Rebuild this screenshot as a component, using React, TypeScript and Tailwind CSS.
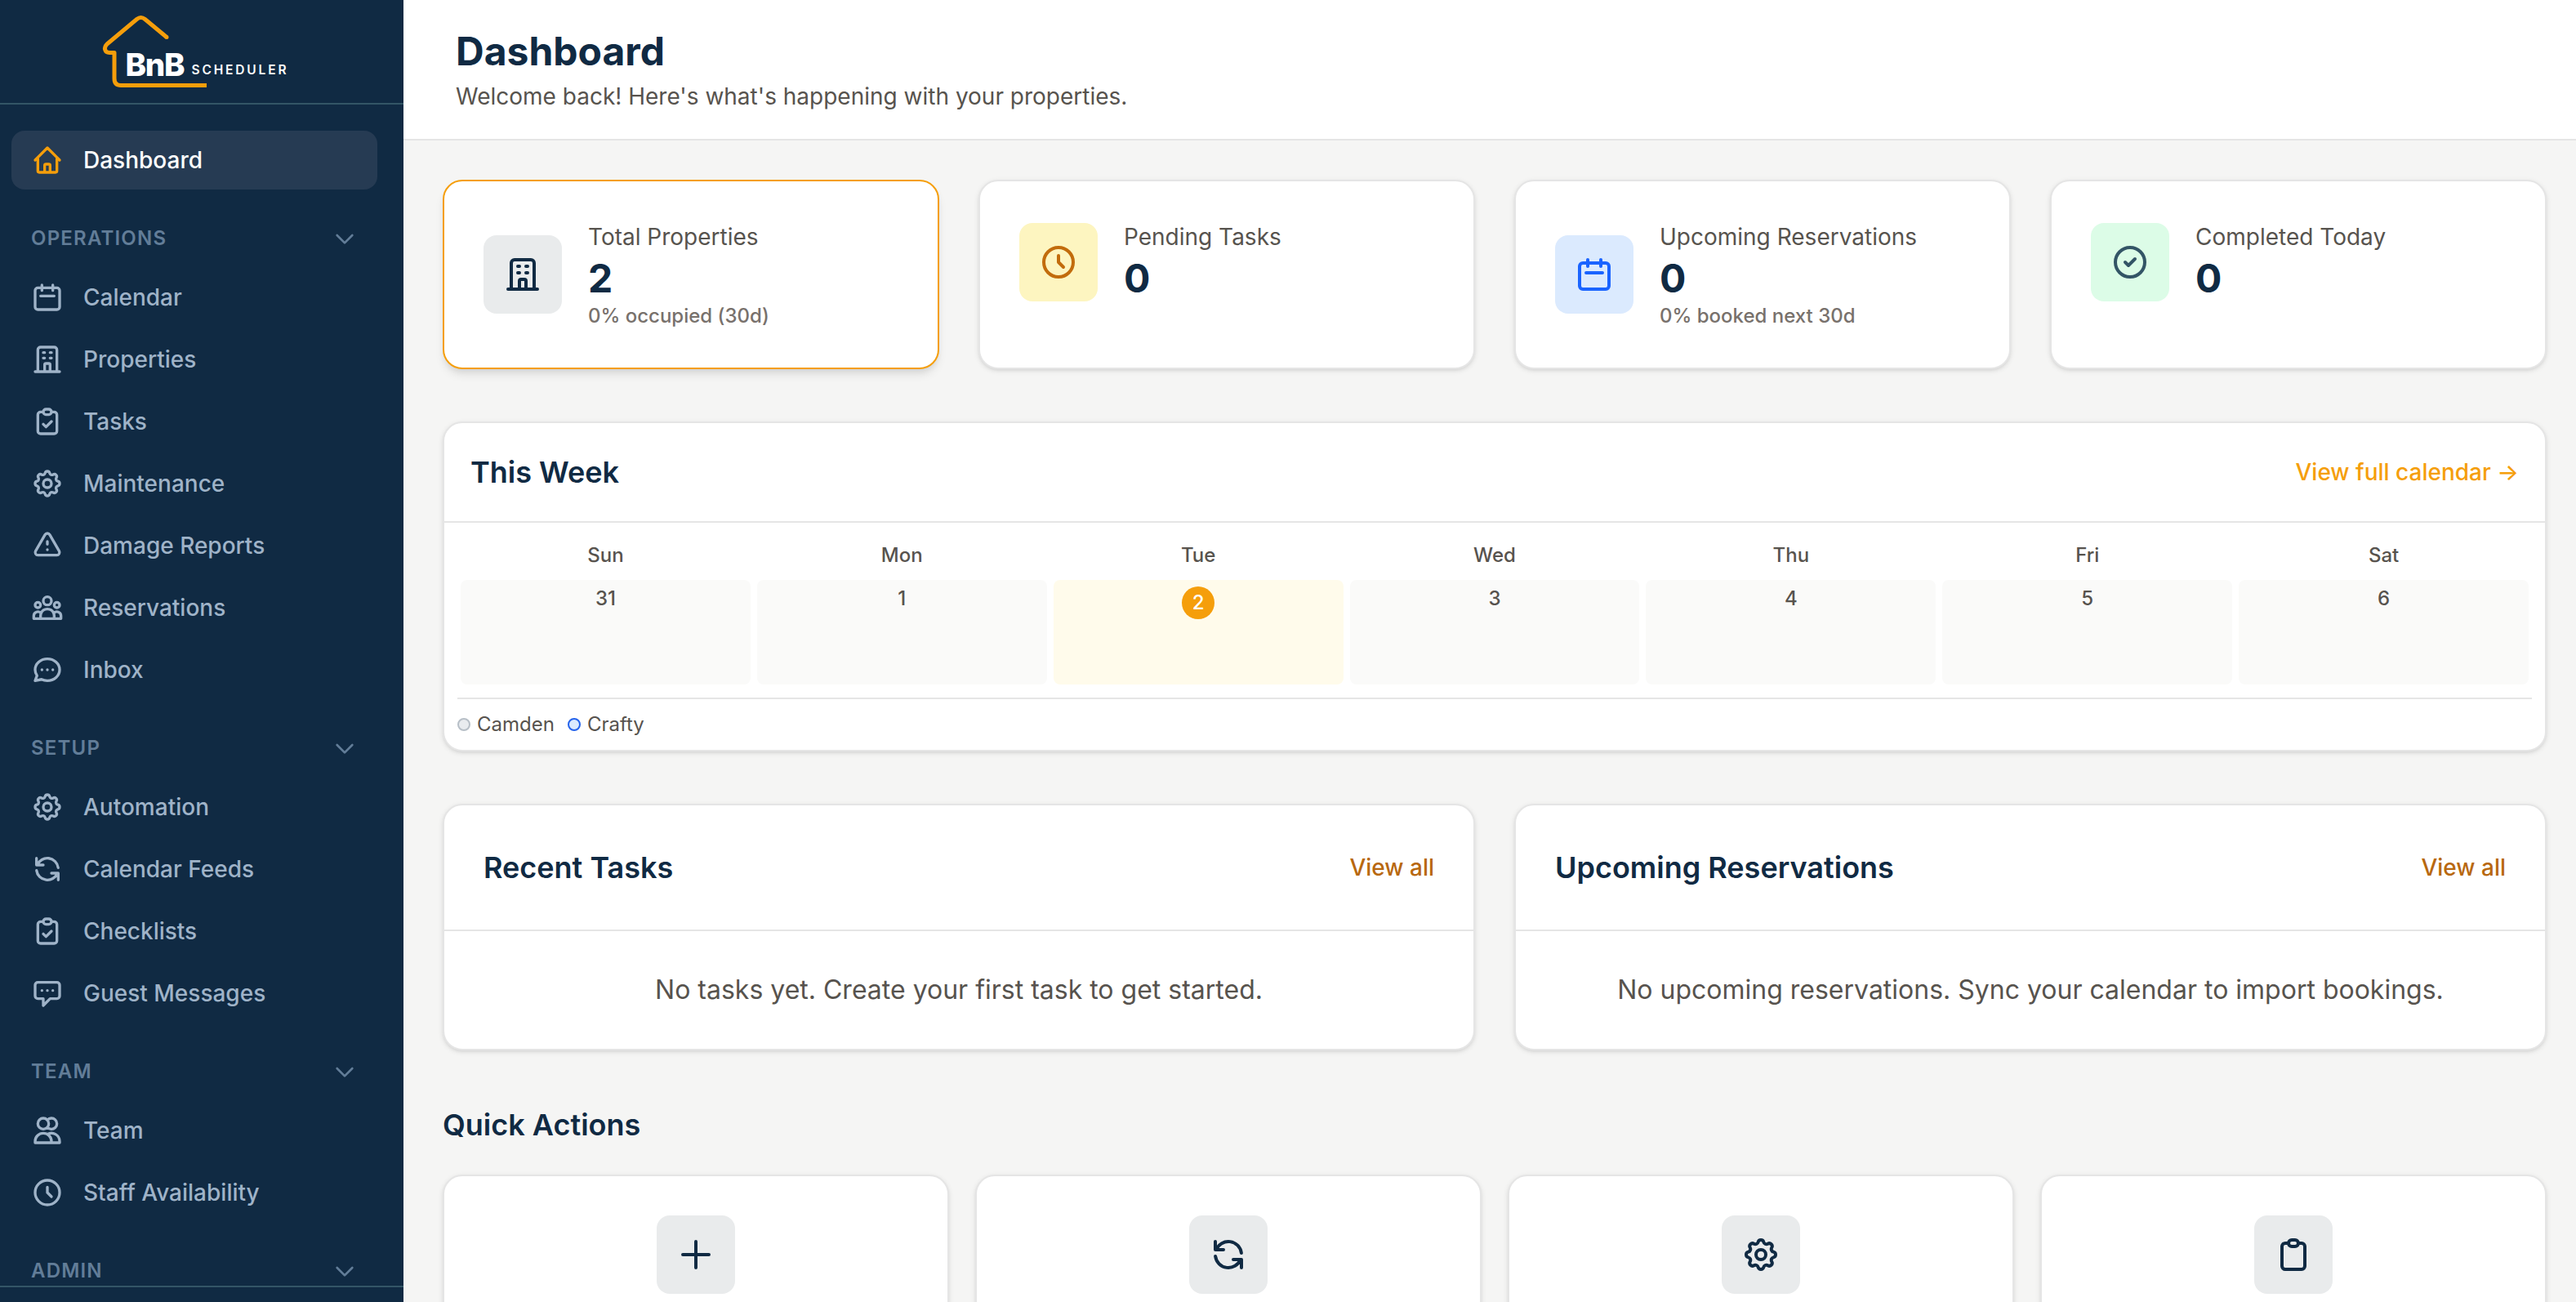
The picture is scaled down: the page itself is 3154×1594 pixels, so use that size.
import React from "react";

type IconProps = { className?: string };

function Svg({ className, children }: IconProps & { children: React.ReactNode }) {
  return (
    <svg viewBox="0 0 24 24" fill="none" stroke="currentColor" strokeWidth={2} strokeLinecap="round" strokeLinejoin="round" className={className}>
      {children}
    </svg>
  );
}

const Home = (p: IconProps) => (
  <Svg {...p}>
    <path d="M3 12l2-2m0 0l7-7 7 7M5 10v10a1 1 0 0 0 1 1h3m10-11l2 2m-2-2v10a1 1 0 0 1-1 1h-3m-6 0a1 1 0 0 0 1-1v-4a1 1 0 0 1 1-1h2a1 1 0 0 1 1 1v4a1 1 0 0 0 1 1m-6 0h6" />
  </Svg>
);
const Calendar = (p: IconProps) => (
  <Svg {...p}>
    <path d="M8 3v4M16 3v4M7 11h10" />
    <rect x="3" y="5" width="18" height="16" rx="2" />
  </Svg>
);
const Building = (p: IconProps) => (
  <Svg {...p}>
    <path d="M19 21V5a2 2 0 0 0-2-2H7a2 2 0 0 0-2 2v16m14 0h2m-2 0h-5m-9 0H3m2 0h5M9 7h1m-1 4h1m4-4h1m-1 4h1m-5 10v-5a1 1 0 0 1 1-1h2a1 1 0 0 1 1 1v5m-4 0h4" />
  </Svg>
);
const Clipboard = (p: IconProps) => (
  <Svg {...p}>
    <path d="M9 5H7a2 2 0 0 0-2 2v12a2 2 0 0 0 2 2h10a2 2 0 0 0 2-2V7a2 2 0 0 0-2-2h-2M9 5a2 2 0 0 0 2 2h2a2 2 0 0 0 2-2M9 5a2 2 0 0 1 2-2h2a2 2 0 0 1 2 2" />
  </Svg>
);
const ClipboardCheck = (p: IconProps) => (
  <Svg {...p}>
    <path d="M9 5H7a2 2 0 0 0-2 2v12a2 2 0 0 0 2 2h10a2 2 0 0 0 2-2V7a2 2 0 0 0-2-2h-2M9 5a2 2 0 0 0 2 2h2a2 2 0 0 0 2-2M9 5a2 2 0 0 1 2-2h2a2 2 0 0 1 2 2m-6 9l2 2 4-4" />
  </Svg>
);
const Gear = (p: IconProps) => (
  <Svg {...p}>
    <path d="M10.325 4.317c.426-1.756 2.924-1.756 3.35 0a1.724 1.724 0 0 0 2.573 1.066c1.543-.94 3.31.826 2.37 2.37a1.724 1.724 0 0 0 1.065 2.572c1.756.426 1.756 2.924 0 3.35a1.724 1.724 0 0 0-1.066 2.573c.94 1.543-.826 3.31-2.37 2.37a1.724 1.724 0 0 0-2.572 1.065c-.426 1.756-2.924 1.756-3.35 0a1.724 1.724 0 0 0-2.573-1.066c-1.543.94-3.31-.826-2.37-2.37a1.724 1.724 0 0 0-1.065-2.572c-1.756-.426-1.756-2.924 0-3.35a1.724 1.724 0 0 0 1.066-2.573c-.94-1.543.826-3.31 2.37-2.37.996.608 2.296.07 2.572-1.065z" />
    <circle cx="12" cy="12" r="3" />
  </Svg>
);
const Warning = (p: IconProps) => (
  <Svg {...p}>
    <path d="M12 9v2m0 4h.01m-6.938 4h13.856c1.54 0 2.502-1.667 1.732-3L13.732 4c-.77-1.333-2.694-1.333-3.464 0L3.34 16c-.77 1.333.192 3 1.732 3z" />
  </Svg>
);
const Group = (p: IconProps) => (
  <Svg {...p}>
    <path d="M17 20h5v-2a3 3 0 0 0-5.356-1.857M17 20H7m10 0v-2c0-.656-.126-1.283-.356-1.857M7 20H2v-2a3 3 0 0 1 5.356-1.857M7 20v-2c0-.656.126-1.283.356-1.857m0 0a5.002 5.002 0 0 1 9.288 0M15 7a3 3 0 1 1-6 0 3 3 0 0 1 6 0zm6 3a2 2 0 1 1-4 0 2 2 0 0 1 4 0zM7 10a2 2 0 1 1-4 0 2 2 0 0 1 4 0z" />
  </Svg>
);
const Chat = (p: IconProps) => (
  <Svg {...p}>
    <path d="M8 12h.01M12 12h.01M16 12h.01M21 12c0 4.418-4.03 8-9 8a9.863 9.863 0 0 1-4.255-.949L3 20l1.395-3.72C3.512 15.042 3 13.574 3 12c0-4.418 4.03-8 9-8s9 3.582 9 8z" />
  </Svg>
);
const Refresh = (p: IconProps) => (
  <Svg {...p}>
    <path d="M4 4v5h.582m15.356 2A8.001 8.001 0 0 0 4.582 9m0 0H9m11 11v-5h-.581m0 0a8.003 8.003 0 0 1-15.357-2m15.357 2H15" />
  </Svg>
);
const Message = (p: IconProps) => (
  <Svg {...p}>
    <path d="M8 10h.01M12 10h.01M16 10h.01M9 16H5a2 2 0 0 1-2-2V6a2 2 0 0 1 2-2h14a2 2 0 0 1 2 2v8a2 2 0 0 1-2 2h-5l-5 5v-5z" />
  </Svg>
);
const Users = (p: IconProps) => (
  <Svg {...p}>
    <path d="M12 4.354a4 4 0 1 1 0 5.292M15 21H3v-1a6 6 0 0 1 12 0v1zm0 0h6v-1a6 6 0 0 0-9-5.197M13 7a4 4 0 1 1-8 0 4 4 0 0 1 8 0z" />
  </Svg>
);
const Clock = (p: IconProps) => (
  <Svg {...p}>
    <path d="M12 8v4l3 3m6-3a9 9 0 1 1-18 0 9 9 0 0 1 18 0z" />
  </Svg>
);
const CheckCircle = (p: IconProps) => (
  <Svg {...p}>
    <path d="M9 12l2 2 4-4m6 2a9 9 0 1 1-18 0 9 9 0 0 1 18 0z" />
  </Svg>
);
const Plus = (p: IconProps) => (
  <Svg {...p}>
    <path d="M12 4v16m8-8H4" />
  </Svg>
);
const Chevron = (p: IconProps) => (
  <Svg {...p}>
    <path d="M19 9l-7 7-7-7" />
  </Svg>
);

type Item = [string, (p: IconProps) => React.JSX.Element];
const sections: { title: string; items: Item[] }[] = [
  {
    title: "OPERATIONS",
    items: [
      ["Calendar", Calendar],
      ["Properties", Building],
      ["Tasks", ClipboardCheck],
      ["Maintenance", Gear],
      ["Damage Reports", Warning],
      ["Reservations", Group],
      ["Inbox", Chat],
    ],
  },
  {
    title: "SETUP",
    items: [
      ["Automation", Gear],
      ["Calendar Feeds", Refresh],
      ["Checklists", ClipboardCheck],
      ["Guest Messages", Message],
    ],
  },
  {
    title: "TEAM",
    items: [
      ["Team", Users],
      ["Staff Availability", Clock],
    ],
  },
  { title: "ADMIN", items: [] },
];

function Logo() {
  return (
    <svg viewBox="0 0 250 110" className="ml-[115px] mt-2.5 h-[110px] w-[250px] shrink-0">
      <path
        d="M89 35.500L62.500 13.500Q57.500 9.500 52.500 13.500L16 44Q13 47 13.500 50.500Q14.500 54.500 19 54.500H25V86Q25 94.500 33 94.500H138"
        fill="none"
        stroke="#f59e0b"
        strokeWidth="5"
        strokeLinejoin="round"
      />
      <circle cx="89" cy="35.500" r="2.500" fill="#f59e0b" />
      <text x="38.500" y="82.500" fill="#fff" fontFamily="Inter" fontWeight="800" fontSize="38.500" textLength="73" lengthAdjust="spacing">BnB</text>
      <text x="119.500" y="80.500" fill="#fff" fontFamily="Inter" fontWeight="600" fontSize="15.500" textLength="116" lengthAdjust="spacing">SCHEDULER</text>
    </svg>
  );
}

function Sidebar() {
  return (
    <aside className="flex h-full w-[494px] shrink-0 flex-col bg-[#102a43]">
      <div className="flex h-32 shrink-0 border-b-2 border-[#335566]">
        <Logo />
      </div>
      <nav className="min-h-0 flex-1 overflow-hidden pl-3.5 pr-8 pt-8">
        <div className="flex h-[72px] items-center gap-6 rounded-2xl bg-[#263b53] px-6 text-[28px] font-medium text-white">
          <Home className="size-10 text-[#f59e0b]" />
          Dashboard
        </div>
        {sections.map((s) => (
          <div key={s.title}>
            <div className="mb-3 mt-9 flex h-12 items-center justify-between px-6 text-2xl font-semibold tracking-[0.05em] text-[#627d98]">
              {s.title}
              <Chevron className="size-8" />
            </div>
            <div className="flex flex-col gap-1">
              {s.items.map(([label, Icon]) => (
                <div key={label} className="flex h-[72px] items-center gap-6 px-6 text-[28px] font-medium text-[#9fb3c8]">
                  <Icon className="size-10" />
                  {label}
                </div>
              ))}
            </div>
          </div>
        ))}
      </nav>
      <div className="h-5 shrink-0 border-t-2 border-[#335566]" />
    </aside>
  );
}

const cardBase = "rounded-3xl border-2 border-[#e5e5e5] bg-white shadow-[0_2px_6px_rgba(0,0,0,0.1),0_2px_4px_-2px_rgba(0,0,0,0.1)]";

function Stat({ icon, tile, label, value, sub, active }: { icon: React.ReactNode; tile: string; label: string; value: string; sub?: string; active?: boolean }) {
  return (
    <div
      className={
        active
          ? "flex h-[232px] items-start rounded-3xl border-2 border-[#f59e0b] bg-white p-12 shadow-[0_8px_12px_-2px_rgba(0,0,0,0.1),0_4px_8px_-4px_rgba(0,0,0,0.1)]"
          : "flex h-[232px] items-start p-12 " + cardBase
      }
    >
      <div className="flex items-center gap-8">
        <div className={"flex size-24 items-center justify-center rounded-2xl " + tile}>{icon}</div>
        <div>
          <div className="text-[28px] leading-[40px] text-[#57534e]">{label}</div>
          <div className="text-5xl leading-[62px] font-bold text-[#102a43]">{value}</div>
          {sub && <div className="text-2xl leading-[30px] font-medium text-[#78716c]">{sub}</div>}
        </div>
      </div>
    </div>
  );
}

const days: [string, number][] = [
  ["Sun", 31],
  ["Mon", 1],
  ["Tue", 2],
  ["Wed", 3],
  ["Thu", 4],
  ["Fri", 5],
  ["Sat", 6],
];

function Week() {
  return (
    <section className={"mt-16 h-[404px] " + cardBase}>
      <div className="flex h-[122px] items-center justify-between border-b-2 border-[#e5e5e5] px-8">
        <h2 className="text-4xl font-semibold text-[#102a43]">This Week</h2>
        <span className="text-[28px] font-medium text-[#f59e0b]">View full calendar →</span>
      </div>
      <div className="px-4 pt-4">
        <div className="grid grid-cols-7">
          {days.map(([d, n]) => (
            <div key={d} className="px-1 text-center text-2xl font-medium text-[#57534e]">
              <div className="h-[54px] leading-[48px]">{d}</div>
              {n === 2 ? (
                <div className="flex h-32 justify-center rounded-lg bg-[#fffbeb] pt-2">
                  <span className="size-10 rounded-full bg-[#f59e0b] leading-10 text-white">{n}</span>
                </div>
              ) : (
                <div className="h-32 rounded-lg bg-[#fafaf9] pt-2 leading-[30px]">{n}</div>
              )}
            </div>
          ))}
        </div>
        <div className="mt-4 flex h-16 items-center gap-4 border-t-2 border-[#e5e5e5] text-2xl text-[#57534e]">
          <span className="flex items-center gap-2">
            <i className="size-4 rounded-full border-2 border-[#b7bfc7] bg-[#e9ecef]" />
            Camden
          </span>
          <span className="flex items-center gap-2">
            <i className="size-4 rounded-full border-2 border-[#2563eb] bg-[#dbeafe]" />
            Crafty
          </span>
        </div>
      </div>
    </section>
  );
}

function Panel({ title, text }: { title: string; text: string }) {
  return (
    <section className={cardBase}>
      <div className="flex h-[154px] items-center justify-between border-b-2 border-[#e5e5e5] px-12">
        <h2 className="text-4xl font-semibold text-[#102a43]">{title}</h2>
        <span className="text-[28px] font-medium text-[#b8680f]">View all</span>
      </div>
      <p className="flex h-36 items-center justify-center text-[32px] text-[#57534e]">{text}</p>
    </section>
  );
}

const actions = [Plus, Refresh, Gear, Clipboard];

export default function App() {
  return (
    <div className="flex h-[1594px] w-[3154px] overflow-hidden bg-[#f5f5f4] font-['Inter',sans-serif]">
      <Sidebar />
      <main className="min-w-0 flex-1">
        <header className="flex h-[172px] flex-col border-b-2 border-[#e5e5e5] bg-white pl-16 pt-[34px]">
          <h1 className="text-5xl leading-[58px] font-bold text-[#102a43]">Dashboard</h1>
          <p className="mt-[5px] text-[28px] leading-[42px] text-[#57534e]">Welcome back! Here's what's happening with your properties.</p>
        </header>
        <div className="pl-12 pr-9 pt-12">
          <div className="grid grid-cols-4 gap-12">
            <Stat active tile="bg-[#e9ebec] text-[#102a43]" icon={<Building className="size-12" />} label="Total Properties" value="2" sub="0% occupied (30d)" />
            <Stat tile="bg-[#fdf5c0] text-[#c26c0c]" icon={<Clock className="size-12" />} label="Pending Tasks" value="0" />
            <Stat tile="bg-[#dbeafe] text-[#1a64ff]" icon={<Calendar className="size-12" />} label="Upcoming Reservations" value="0" sub="0% booked next 30d" />
            <Stat tile="bg-[#dcfce7] text-[#335566]" icon={<CheckCircle className="size-12" />} label="Completed Today" value="0" />
          </div>
          <Week />
          <div className="mt-16 grid grid-cols-2 gap-12">
            <Panel title="Recent Tasks" text="No tasks yet. Create your first task to get started." />
            <Panel title="Upcoming Reservations" text="No upcoming reservations. Sync your calendar to import bookings." />
          </div>
          <h2 className="mt-16 text-4xl leading-[54px] font-semibold text-[#102a43]">Quick Actions</h2>
          <div className="mt-[34px] grid grid-cols-4 gap-8">
            {actions.map((Icon, i) => (
              <div key={i} className={"flex h-[280px] justify-center pt-12 " + cardBase}>
                <div className="flex size-24 items-center justify-center rounded-2xl bg-[#e9ebec] text-[#102a43]">
                  <Icon className="size-12" />
                </div>
              </div>
            ))}
          </div>
        </div>
      </main>
    </div>
  );
}
